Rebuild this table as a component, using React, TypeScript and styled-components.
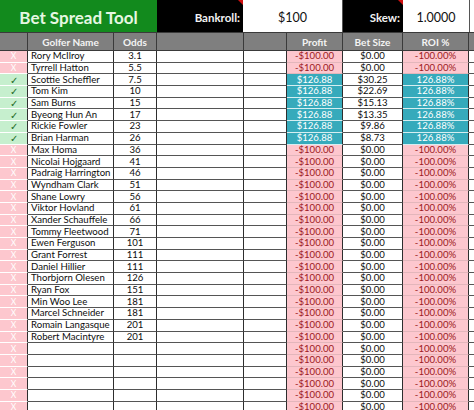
import React from "react";
import styled, { createGlobalStyle, css } from "styled-components";

const GlobalStyle = createGlobalStyle`
  html, body { margin: 0; padding: 0; background: #ffffff; }
  body { font-family: Lato, "Liberation Sans", sans-serif; width: 474px; height: 410px; overflow: hidden; }
`;

const COLS = "28px 86px 43px 87px 43px 56px 60px 66px 5px";

const Sheet = styled.div`
  width: 474px;
  height: 410px;
  overflow: hidden;
  display: flex;
  flex-direction: column;
  background: #fff;
`;

const TopBar = styled.div`
  display: grid;
  grid-template-columns: 157px 86px 100px 60px 67px 4px;
  height: 32px;
  flex: none;
`;

const Title = styled.div`
  background: #128a1d;
  color: #e6f7e2;
  font-weight: 700;
  font-size: 17px;
  display: flex;
  align-items: center;
  justify-content: center;
  padding-top: 2px;
`;

const Label = styled.div`
  position: relative;
  background: #000;
  color: #f2f2f2;
  font-weight: 700;
  font-size: 11.5px;
  display: flex;
  align-items: center;
  justify-content: flex-end;
  padding-right: 3px;
  padding-top: 2px;
`;

const CommentMark = styled.span`
  position: absolute;
  top: 0;
  right: 0;
  width: 0;
  height: 0;
  border-top: 5px solid #d01010;
  border-left: 5px solid transparent;
`;

const InputBox = styled.div`
  background: #fff;
  color: #111;
  font-size: 12.5px;
  display: flex;
  align-items: center;
  justify-content: center;
  padding-top: 2px;
  border-right: 1px solid #555;
`;

const Filler = styled.div`
  background: #fff;
`;

const HeaderRow = styled.div`
  display: grid;
  grid-template-columns: ${COLS};
  height: 19px;
  flex: none;
  background: #7f7f7f;
  border-top: 1px solid #3a3a3a;
  border-bottom: 1px solid #3a3a3a;
  box-sizing: border-box;
`;

const HeadCell = styled.div<{ $noBorder?: boolean }>`
  color: #f4f4f4;
  font-weight: 700;
  font-size: 10px;
  display: flex;
  align-items: center;
  justify-content: center;
  border-right: ${(p) => (p.$noBorder ? "none" : "1px solid #3a3a3a")};
`;

const Row = styled.div`
  display: grid;
  grid-template-columns: ${COLS};
  height: 11.7px;
  flex: none;
`;

type Tone = "pink" | "green" | "teal" | "plain";

const toneStyles: Record<Tone, ReturnType<typeof css>> = {
  pink: css`
    background: #fdc7ce;
    color: #9c1a22;
    border-bottom-color: #e3b6bb;
  `,
  green: css`
    background: #c6efce;
    color: #1c6b22;
    border-bottom-color: #e9f6ea;
  `,
  teal: css`
    background: #36aabb;
    color: #ffffff;
    border-bottom-color: #d6eef1;
  `,
  plain: css`
    background: #ffffff;
    color: #0d0d0d;
    border-bottom-color: #555555;
  `,
};

const Cell = styled.div<{ $tone?: Tone; $align?: "left" | "center"; $noRight?: boolean }>`
  box-sizing: border-box;
  font-size: 9.6px;
  line-height: 10px;
  white-space: nowrap;
  overflow: hidden;
  display: flex;
  align-items: center;
  justify-content: ${(p) => (p.$align === "left" ? "flex-start" : "center")};
  padding-left: ${(p) => (p.$align === "left" ? "3px" : "0")};
  border-bottom: 1px solid;
  border-right: ${(p) => (p.$noRight ? "none" : "1px solid #2e2e2e")};
  ${(p) => toneStyles[p.$tone ?? "plain"]}
`;

const StatusCell = styled(Cell)<{ $ok: boolean }>`
  border-right: 1px solid #2e2e2e;
  font-size: ${(p) => (p.$ok ? "10px" : "8.5px")};
  color: ${(p) => (p.$ok ? "#1f6a24" : "#ffffff")};
  border-bottom-color: #ffffff;
`;

type Golfer = { name: string; odds: string; bet?: string };

const golfers: Golfer[] = [
  { name: "Rory McIlroy", odds: "3.1" },
  { name: "Tyrrell Hatton", odds: "5.5" },
  { name: "Scottie Scheffler", odds: "7.5", bet: "$30.25" },
  { name: "Tom Kim", odds: "10", bet: "$22.69" },
  { name: "Sam Burns", odds: "15", bet: "$15.13" },
  { name: "Byeong Hun An", odds: "17", bet: "$13.35" },
  { name: "Rickie Fowler", odds: "23", bet: "$9.86" },
  { name: "Brian Harman", odds: "26", bet: "$8.73" },
  { name: "Max Homa", odds: "36" },
  { name: "Nicolai Hojgaard", odds: "41" },
  { name: "Padraig Harrington", odds: "46" },
  { name: "Wyndham Clark", odds: "51" },
  { name: "Shane Lowry", odds: "56" },
  { name: "Viktor Hovland", odds: "61" },
  { name: "Xander Schauffele", odds: "66" },
  { name: "Tommy Fleetwood", odds: "71" },
  { name: "Ewen Ferguson", odds: "101" },
  { name: "Grant Forrest", odds: "111" },
  { name: "Daniel Hillier", odds: "111" },
  { name: "Thorbjorn Olesen", odds: "126" },
  { name: "Ryan Fox", odds: "151" },
  { name: "Min Woo Lee", odds: "181" },
  { name: "Marcel Schneider", odds: "181" },
  { name: "Romain Langasque", odds: "201" },
  { name: "Robert Macintyre", odds: "201" },
];

const rows: Golfer[] = [...golfers, ...Array.from({ length: 6 }, () => ({ name: "", odds: "" }))];

export default function App() {
  return (
    <>
      <GlobalStyle />
      <Sheet>
        <TopBar>
          <Title>Bet Spread Tool</Title>
          <Label>
            Bankroll:
            <CommentMark />
          </Label>
          <InputBox>$100</InputBox>
          <Label>
            Skew:
            <CommentMark />
          </Label>
          <InputBox>1.0000</InputBox>
          <Filler />
        </TopBar>
        <HeaderRow>
          <HeadCell />
          <HeadCell>Golfer Name</HeadCell>
          <HeadCell>Odds</HeadCell>
          <HeadCell />
          <HeadCell />
          <HeadCell>Profit</HeadCell>
          <HeadCell>Bet Size</HeadCell>
          <HeadCell>ROI %</HeadCell>
          <HeadCell $noBorder />
        </HeaderRow>
        {rows.map((g, i) => {
          const ok = !!g.bet;
          return (
            <Row key={i}>
              <StatusCell $ok={ok} $tone={ok ? "green" : "pink"}>
                {ok ? "✓" : "X"}
              </StatusCell>
              <Cell $align="left">{g.name}</Cell>
              <Cell>{g.odds}</Cell>
              <Cell />
              <Cell />
              <Cell $tone={ok ? "teal" : "pink"}>{ok ? "$126.88" : "-$100.00"}</Cell>
              <Cell>{ok ? g.bet : "$0.00"}</Cell>
              <Cell $tone={ok ? "teal" : "pink"}>{ok ? "126.88%" : "-100.00%"}</Cell>
              <Cell $noRight />
            </Row>
          );
        })}
      </Sheet>
    </>
  );
}
